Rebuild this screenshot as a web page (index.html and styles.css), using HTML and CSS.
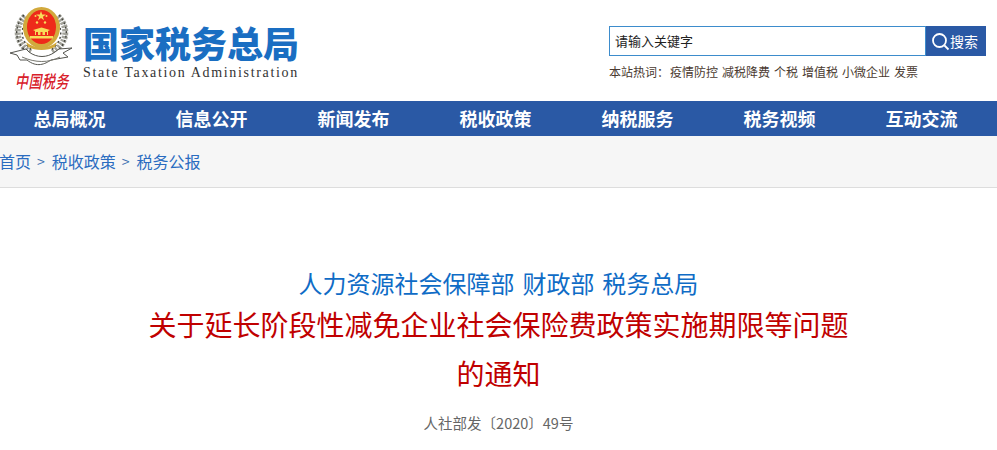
FILE: index.html
```html
<!DOCTYPE html>
<html lang="zh-CN">
<head>
<meta charset="utf-8">
<title>国家税务总局</title>
<link rel="stylesheet" href="styles.css">
</head>
<body>
<header class="top">
  <div class="brand">
    <div class="emblem">
      <svg class="emblem-svg" width="83" height="70" viewBox="0 0 83 70">
        <g fill="none" stroke="#a3a39a" stroke-width="6" stroke-dasharray="2.500 1.200">
          <path d="M25 16C14 27 15 43 31 53"/>
          <path d="M58 16C69 27 68 43 52 53"/>
        </g>
        <g fill="none" stroke="#44443e" stroke-width="1.400" stroke-dasharray="2 2.500">
          <path d="M24 15C13 27 14 44 30 54"/>
          <path d="M59 15C70 27 69 44 53 54"/>
          <path d="M27 20C20 29 20 41 32 50"/>
          <path d="M56 20C63 29 63 41 51 50"/>
        </g>
        <ellipse cx="41.500" cy="27.500" rx="18.500" ry="20.500" fill="#d2a93c"/>
        <ellipse cx="41.500" cy="27" rx="14.500" ry="17" fill="#ee2a1a"/>
        <path d="M41 11l1.200 3.500h3.700l-3 2.200 1.100 3.600-3-2.200-3 2.200 1.100-3.600-3-2.200h3.700z" fill="#f8dc5a"/>
        <g fill="#f8dc5a">
          <circle cx="35.500" cy="16" r="1"/><circle cx="46.500" cy="16" r="1"/>
          <circle cx="37" cy="22.500" r="1.200"/><circle cx="45" cy="22.500" r="1.200"/>
          <path d="M33 30l8.500-2.500L50 30l-2 1v4h-13v-4z"/>
          <path d="M30 36h23v2.500H30z"/>
        </g>
        <path d="M36 32h2v3h-2zM40.500 32h2v3h-2zM45 32h2v3h-2z" fill="#ee2a1a"/>
        <path d="M26 42c8 7 23 7 31 0l-2 5c-7 4-20 4-27 0z" fill="#d2a93c"/>
        <path d="M10 53l16-4 3 3c8 6 18 6 26 0l4-3 13-1-9 5 5 4-17 3c-6 4-14 8-24 0L20 60l-3-5z" fill="#fff" stroke="#55554f" stroke-width="1"/>
        <path d="M22 57c14 6 26 6 38 0" fill="none" stroke="#77776f" stroke-width="1"/>
      </svg>
      <div class="motto">中国税务</div>
    </div>
    <div class="names">
      <div class="name-cn">国家税务总局</div>
      <div class="name-en">State Taxation Administration</div>
    </div>
  </div>
  <div class="search-area">
    <form class="search">
      <div class="search-input">请输入关键字</div>
      <div class="search-btn">
        <svg width="19" height="19" viewBox="0 0 19 19"><circle cx="8.500" cy="8.500" r="6.500" fill="none" stroke="#fff" stroke-width="1.800"/><path d="M13.500 13.500l4 4" stroke="#fff" stroke-width="1.800"/></svg>
        <span>搜索</span>
      </div>
    </form>
    <div class="hot">
      <span class="hot-label">本站热词：</span>
      <a>疫情防控</a><a>减税降费</a><a>个税</a><a>增值税</a><a>小微企业</a><a>发票</a>
    </div>
  </div>
</header>
<nav class="nav">
  <a>总局概况</a><a>信息公开</a><a>新闻发布</a><a>税收政策</a><a>纳税服务</a><a>税务视频</a><a>互动交流</a>
</nav>
<div class="crumbs">
  <a class="first">首页</a><span class="sep">&gt;</span><a>税收政策</a><span class="sep">&gt;</span><a>税务公报</a>
</div>
<main class="article">
  <div class="issuer">人力资源社会保障部 财政部 税务总局</div>
  <h1 class="title">关于延长阶段性减免企业社会保险费政策实施期限等问题<br>的通知</h1>
  <div class="docno">人社部发〔2020〕49号</div>
</main>
</body>
</html>
```
FILE: styles.css
```css
* { box-sizing: border-box; }
html, body { margin: 0; padding: 0; }
body {
  background: #fff;
  font-family: "Noto Sans CJK SC", "Liberation Sans", sans-serif;
  width: 997px;
  height: 450px;
  overflow: hidden;
}
.top {
  height: 101px;
  display: flex;
  justify-content: space-between;
  padding: 0 11px 0 0;
}
.brand { display: flex; }
.emblem { width: 83px; }
.emblem-svg { display: block; }
.motto {
  margin: 1px 0 0 15px;
  width: 54px;
  color: #d8202a;
  font-size: 13px;
  line-height: 20px;
  font-weight: 500;
  font-style: italic;
  letter-spacing: 0.500px;
  white-space: nowrap;
  transform: scaleY(1.350);
  font-family: "Noto Sans CJK SC", sans-serif;
}
.names { padding-top: 21px; }
.name-cn {
  color: #1a6ec2;
  font-size: 36px;
  line-height: 43px;
  font-weight: 900;
  white-space: nowrap;
}
.name-en {
  margin-top: 1px;
  color: #333;
  font-family: "Liberation Serif", serif;
  font-size: 14px;
  line-height: 16px;
  letter-spacing: 1.670px;
  white-space: nowrap;
}
.search-area { width: 377px; padding-top: 26px; }
.search { display: flex; height: 30px; }
.search-input {
  width: 317px;
  border: 1px solid #3d8ccc;
  font-size: 13px;
  line-height: 27px;
  padding-left: 5px;
  color: #222;
}
.search-btn {
  width: 60px;
  background: #2a59a5;
  color: #fff;
  display: flex;
  align-items: center;
  padding-left: 5px;
  gap: 0;
  font-size: 14px;
}
.hot {
  margin-top: 7px;
  font-size: 12px;
  line-height: 17px;
  color: #4a3a30;
  white-space: nowrap;
  display: flex;
}
.hot-label { margin-right: 1px; }
.hot a { margin-right: 4px; }
.nav {
  height: 35px;
  background: #2a59a5;
  display: grid;
  grid-template-columns: repeat(7, 142px);
  padding-right: 6px;
  justify-content: center;
}
.nav a {
  color: #fff;
  font-size: 18px;
  font-weight: 700;
  line-height: 35px;
  text-align: center;
  white-space: nowrap;
}
.crumbs {
  height: 52px;
  background: #f6f6f6;
  border-bottom: 1px solid #ddd;
  font-size: 16px;
  line-height: 50px;
  color: #2a6cc0;
  display: flex;
  white-space: nowrap;
}
.first { margin-left: -1px; }
.sep { margin: 0 7px 0 6px; color: #3a6fb0; font-size: 14px; }
.article { text-align: center; padding-top: 77px; }
.issuer {
  color: #0f6cc6;
  font-size: 24px;
  line-height: 36px;
  word-spacing: 2.500px;
}
.title {
  margin: -1px 0 0;
  color: #c00000;
  font-size: 28px;
  line-height: 49px;
  font-weight: 400;
}
.docno {
  margin-top: 14px;
  color: #666;
  font-size: 14.500px;
  line-height: 22px;
}
```
